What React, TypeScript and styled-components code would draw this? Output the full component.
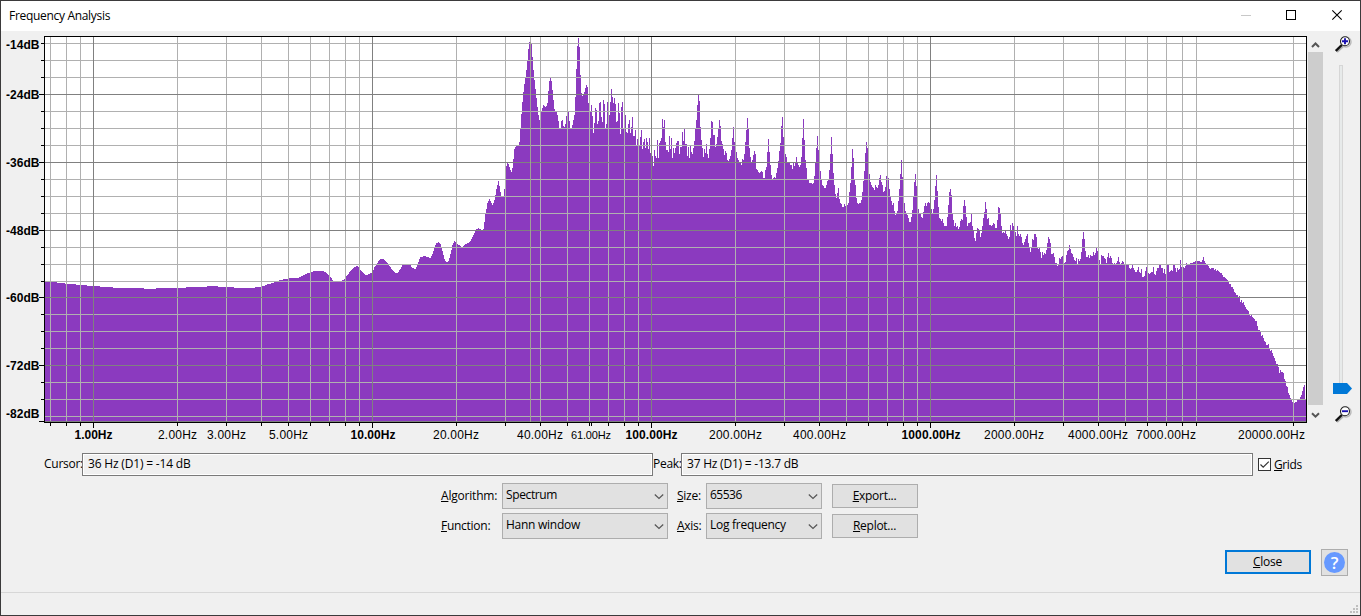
import React from 'react';
import styled, { createGlobalStyle } from 'styled-components';

const GlobalStyle = createGlobalStyle`
  body {
    margin: 0;
    overflow: hidden;
  }

  * {
    box-sizing: border-box;
  }
`;

const Window = styled.div`
  display: flex;
  flex-direction: column;
  width: 1361px;
  height: 616px;
  border: 1px solid #3b3a3b;
  background: #f0f0f0;
  color: #000;
  font-family: 'Open Sans', 'Noto Sans', sans-serif;
  font-size: 12px;
  line-height: 16px;
  white-space: nowrap;
`;

const TitleBar = styled.div`
  display: flex;
  justify-content: space-between;
  height: 30px;
  padding: 7px 17px 0 8px;
  background: #fff;
`;

const Label = styled.span<{ $track?: number }>`
  letter-spacing: ${({ $track = -0.27 }) => $track}px;
`;

const Mnemonic = styled.span`
  text-decoration: underline;
  text-decoration-thickness: 1px;
  text-underline-offset: 1px;
`;

const PlotRow = styled.div`
  display: flex;
  height: 416px;
`;

const ScrollBar = styled.div`
  display: flex;
  flex-direction: column;
  align-items: center;
  width: 15px;
  height: 390px;
  margin: 5px 0 0 1px;
`;

const ScrollThumb = styled.div`
  width: 15px;
  height: 353px;
  background: #cdcdcd;
`;

const ZoomColumn = styled.div`
  display: flex;
  flex-direction: column;
  width: 20px;
  margin: 5px 0 0 9px;
`;

const SliderTrack = styled.div`
  width: 4px;
  height: 318px;
  margin: 12px 0 0 7px;
  border: 1px solid #d6d6d6;
  border-bottom: 0;
  background: #e7eaea;
`;

const SliderThumb = styled.svg`
  margin-bottom: 12px;
`;

const MagnifierIcon = styled.svg`
  margin-left: 3px;
`;

const ReadoutRow = styled.div`
  display: flex;
  align-items: center;
  height: 23px;
  margin-top: 6px;
  padding-left: 43px;
`;

const ReadoutLabel = styled(Label)<{ $width: number }>`
  width: ${({ $width }) => $width}px;
  margin-top: -1px;
`;

const Readout = styled.div<{ $width: number }>`
  width: ${({ $width }) => $width}px;
  height: 23px;
  padding: 2px 0 0 5px;
  border: 1px solid #7a7a7a;
  box-shadow: inset 0 0 0 1px #fff;
`;

const CheckBox = styled.span`
  display: flex;
  width: 13px;
  height: 13px;
  margin: 0 3px 0 5px;
  border: 1px solid #333;
  background: #fff;
`;

const Controls = styled.div`
  display: grid;
  grid-template-columns: 61px 166px 38px 116px 86px;
  grid-auto-rows: 26px;
  row-gap: 4px;
  align-items: center;
  margin: 7px 0 0 440px;

  & > :nth-child(5n + 3) {
    padding-left: 9px;
  }

  & > :nth-child(5n) {
    margin-left: 10px;
  }
`;

const Select = styled.div`
  display: flex;
  justify-content: space-between;
  height: 26px;
  padding: 3px 3px 0 3px;
  border: 1px solid #adadad;
  background: #e1e1e1;
`;

const Button = styled.button<{ $primary?: boolean }>`
  width: 86px;
  height: 24px;
  padding: 0 1px 1px 0;
  border: ${({ $primary }) => ($primary ? '2px solid #0078d7' : '1px solid #adadad')};
  background: #e1e1e1;
  color: #000;
  font: inherit;
`;

const Footer = styled.div`
  display: flex;
  justify-content: flex-end;
  align-items: flex-start;
  gap: 10px;
  height: 27px;
  margin-top: 10px;
  padding-right: 12px;

  & > ${Button} {
    margin-top: 1px;
  }
`;

const HelpButton = styled.button`
  display: flex;
  width: 27px;
  height: 27px;
  padding: 2px;
  border: 1px solid #adadad;
  background: #e1e1e1;
`;

const StatusBar = styled.div`
  display: flex;
  flex: 1;
  justify-content: flex-end;
  align-items: flex-end;
  margin-top: 16px;
  padding: 0 2px 2px 0;
  border-top: 1px solid #d7d7d7;
`;

// Low end of the spectrum, smooth enough to be interpolated: [x, top]
const lowPoints = [
  [45, 282], [54, 282], [60, 283], [70, 284], [81, 285], [93, 286], [107, 287],
  [118, 288], [143, 288], [145, 289], [154, 289], [156, 288], [184, 288], [186, 287],
  [205, 287], [207, 286], [217, 286], [219, 287], [233, 287], [235, 288], [252, 288],
  [257, 287], [263, 286], [268, 284], [272, 283], [277, 281], [280, 280], [290, 278],
  [297, 278], [301, 276], [308, 273], [314, 271], [323, 271], [326, 273], [330, 277],
  [333, 281], [335, 282], [338, 282], [341, 281], [344, 279], [347, 275], [350, 271],
  [354, 267], [357, 266], [361, 271], [365, 275], [369, 274], [372, 272], [374, 267],
  [378, 261], [380, 259], [383, 259], [386, 262], [389, 266], [392, 270], [395, 273],
  [397, 273], [400, 269], [402, 265], [410, 265], [412, 268], [415, 269], [417, 264],
  [420, 257], [424, 256], [430, 258], [432, 254], [434, 247], [436, 243], [438, 242],
  [440, 244], [442, 251], [444, 259], [446, 262], [448, 261], [450, 254], [452, 245],
  [454, 241], [457, 244], [460, 246], [462, 247], [465, 244], [468, 243], [470, 241],
  [472, 237], [474, 233], [476, 229], [478, 228], [480, 229], [482, 230], [483, 229],
  [484, 222], [485, 214], [487, 203], [489, 199], [490, 201], [492, 205], [494, 200],
  [496, 189], [498, 181], [499, 186], [500, 192], [501, 197], [503, 197], [504, 189],
  [505, 166],
];

// One value per column from x = 506
const highTops = [
  166, 163, 164, 167, 170, 172, 168, 159, 149, 147, 146, 146, 146, 142, 129, 114, 102, 92,
  84, 78, 70, 61, 49, 42, 41, 44, 57, 70, 80, 89, 98, 107, 115, 120, 112, 111, 108, 105,
  106, 107, 106, 103, 91, 81, 78, 81, 90, 100, 109, 111, 112, 115, 121, 128, 128, 121, 120,
  126, 127, 124, 116, 128, 112, 121, 128, 128, 125, 120, 115, 97, 69, 46, 38, 47, 75, 93,
  96, 95, 92, 88, 85, 87, 103, 111, 111, 105, 116, 133, 123, 108, 110, 124, 121, 103, 102,
  117, 122, 100, 104, 128, 124, 102, 112, 115, 102, 89, 97, 103, 98, 104, 122, 121, 103,
  113, 134, 107, 102, 128, 128, 115, 132, 133, 124, 120, 133, 127, 117, 136, 136, 130, 145,
  139, 145, 146,
  // 640
  137, 130, 149, 142, 139, 148, 138, 142, 149, 138, 153, 154, 156, 166, 150, 156, 158, 140,
  158, 143, 141, 138, 119, 127, 120, 142, 150, 150, 152, 136, 149, 138, 158, 148, 153, 148,
  143, 141, 141, 154, 147, 147, 132, 141, 129, 144, 144, 156, 147, 158, 146, 152, 154, 148,
  141, 129, 120, 105, 95, 101, 127, 140, 148, 157, 149, 153, 144, 154, 158, 149, 138, 121,
  122, 135, 135, 147, 144, 137, 129, 120, 126, 141, 144, 149, 155, 151, 153, 160, 161, 159,
  156, 150, 138, 127, 142, 144, 152, 158, 160, 162, 162, 165, 159, 160, 154, 142, 130, 118,
  129, 148, 157, 162, 160, 155, 151, 154, 169, 170, 172, 173, 172, 171, 172, 178, 178, 170,
  167, 152, 139, 152, 165, 175, 179, 178, 177, 178, 173, 168, 161, 151, 143, 126, 117, 137,
  150, 154, 157, 162, 162, 162, 165, 165, 169, 163, 166, 163, 157, 163, 165, 167, 165, 157,
  138, 119, 140, 160, 168, 179, 180, 183, 183, 183, 184, 183, 176, 163, 148, 136, 150, 163,
  171, 180, 185, 186, 188, 188, 185, 181, 180, 170, 154, 137, 154, 173, 185, 194, 198, 193,
  188, 199, 203, 204, 207, 207, 204, 206, 206, 205, 203, 192, 183, 167, 149, 158, 180, 185,
  198, 203, 204, 203,
  // 860
  203, 200, 192, 181, 171, 153, 142, 148, 165, 174, 182, 185, 187, 188, 190, 185, 187, 188,
  185, 178, 175, 182, 185, 192, 191, 187, 176, 180, 178, 189, 196, 201, 205, 203, 211, 215,
  214, 211, 201, 189, 174, 160, 177, 199, 203, 211, 214, 215, 218, 222, 222, 217, 210, 196,
  182, 174, 186, 201, 209, 213, 214, 217, 218, 212, 206, 203, 206, 203, 202, 203, 210, 209,
  214, 209, 200, 186, 175, 191, 207, 218, 219, 221, 219, 223, 226, 226, 226, 217, 205, 192,
  189, 195, 214, 220, 226, 223, 227, 226, 229, 227, 221, 219, 220, 206, 200, 206, 217, 226,
  223, 223, 222, 214, 226, 231, 238, 241, 233, 228, 229, 231, 237, 233, 226, 218, 212, 202,
  209, 219, 218, 225, 225, 226, 225, 223, 224, 228, 228, 220, 207, 208, 214, 226, 233, 232,
  233, 231, 234, 236, 239, 237, 225, 231, 223, 226, 231, 232, 236, 226, 234, 236, 234, 237,
  243, 245, 242, 239, 236, 234, 243, 248, 252, 248, 239, 240, 234, 234, 237, 248, 249, 248,
  252, 258, 252, 255, 253, 254, 250, 243, 237, 239, 243, 254, 254, 253, 257, 263, 263, 266,
  264, 258, 259, 257, 256, 263, 263, 262, 255, 251, 250, 245,
  // 1070
  249, 253, 254, 257, 260, 261, 258, 264, 259, 261, 259, 252, 239, 232, 239, 251, 257, 257,
  255, 258, 255, 256, 256, 252, 255, 253, 248, 251, 255, 260, 264, 255, 256, 256, 258, 259,
  263, 257, 253, 258, 256, 258, 263, 264, 263, 264, 263, 261, 257, 262, 264, 263, 261, 262,
  264, 263, 264, 265, 265, 268, 269, 268, 265, 268, 270, 272, 272, 270, 267, 272, 273, 269,
  277, 277, 276, 271, 267, 272, 273, 274, 273, 272, 272, 267, 274, 275, 271, 268, 268, 265,
  265, 268, 268, 273, 269, 274, 265, 265, 265, 272, 271, 270, 271, 265, 265, 268, 272, 268,
  270, 269, 260, 267, 267, 267, 268, 266, 263, 264, 265, 265, 263, 263, 263, 262, 262, 261,
  261, 261, 261, 261, 262, 262, 260, 257, 261, 263, 264, 265, 266, 268, 269, 268, 268, 268,
  270, 269, 271, 270, 271, 272, 273, 273, 275, 277, 277, 278, 279, 280, 281, 284, 284, 287,
  287, 289, 292, 293, 295, 295, 297, 296, 302, 300, 303, 302, 305, 307, 309, 310, 311, 315,
  316, 315, 317, 318, 319, 321, 321, 326, 330, 330, 331, 336, 335, 338, 341, 342, 345, 345,
  344, 349, 351, 350, 353, 356, 358, 361, 364, 364, 367, 373, 370, 372, 372, 373, 379, 381,
  386, 387, 393, 395, 398, 400, 402, 402, 403, 402, 402, 400, 399, 400, 397, 395, 391, 387,
  385, 399,
];

const topsFromPoints = (points: number[][]) => {
  const tops: number[] = [];
  for (let i = 0; i < points.length - 1; i++) {
    const [x0, y0] = points[i];
    const [x1, y1] = points[i + 1];
    for (let x = x0; x < x1; x++) {
      tops.push(Math.round(y0 + ((y1 - y0) * (x - x0)) / (x1 - x0)));
    }
  }
  tops.push(points[points.length - 1][1]);
  return tops;
};

const spectrumPath = () => {
  const tops = [...topsFromPoints(lowPoints), ...highTops].slice(0, 1261);
  return `M45 422${tops.map((y) => `V${y}h1`).join('')}V422Z`;
};

const majorX = [93, 372, 651, 930];
const minorX = [
  50, 66, 80, 177, 226, 261, 288, 310, 329, 345, 359, 456, 505, 540, 567, 589, 608, 624, 638,
  735, 784, 819, 846, 868, 887, 903, 917, 1014, 1063, 1098, 1125, 1147, 1166, 1182, 1196, 1293,
];
const majorY = [94, 162, 230, 297, 365];
const minorY = [
  43, 60, 77, 111, 128, 145, 179, 196, 213, 247, 264, 281, 314, 331, 348, 382, 399, 416,
];

const dbLabels: [number, string][] = [
  [49, '-14dB'],
  [99, '-24dB'],
  [167, '-36dB'],
  [235, '-48dB'],
  [302, '-60dB'],
  [370, '-72dB'],
  [418, '-82dB'],
];

// x centre, text, drawn width, weight, size
const hzLabels: [number, string, number, number, number][] = [
  [93.5, '1.00Hz', 38, 700, 12],
  [177.5, '2.00Hz', 39, 400, 12],
  [226.5, '3.00Hz', 39, 400, 12],
  [288.5, '5.00Hz', 39, 400, 12],
  [373, '10.00Hz', 45, 700, 12],
  [456, '20.00Hz', 46, 400, 12],
  [540, '40.00Hz', 46, 400, 12],
  [591, '61.00Hz', 40, 400, 11],
  [651.5, '100.00Hz', 52, 700, 12],
  [735.5, '200.00Hz', 53, 400, 12],
  [819.5, '400.00Hz', 53, 400, 12],
  [931, '1000.00Hz', 59, 700, 12],
  [1014, '2000.00Hz', 60, 400, 12],
  [1098, '4000.00Hz', 60, 400, 12],
  [1166, '7000.00Hz', 60, 400, 12],
  [1271.5, '20000.00Hz', 67, 400, 12],
];

const vLines = (xs: number[], from: number, to: number) =>
  xs.map((x) => `M${x + 0.5} ${from}V${to}`).join('');
const hLines = (ys: number[], from: number, to: number) =>
  ys.map((y) => `M${from} ${y + 0.5}H${to}`).join('');

const SpectrumPlot = () => (
  <svg width="1306" height="416" viewBox="1 31 1306 416" fill="none">
    <g shapeRendering="crispEdges">
      <rect x="44.5" y="36.5" width="1262" height="386" fill="#fff" />
      <path d={spectrumPath()} fill="#8b3abf" />
      <path d={vLines(minorX, 37, 422) + hLines(minorY, 45, 1306)} stroke="#b0b0b0" />
      <path
        d={vLines(majorX, 37, 422) + hLines([...majorY, 421], 45, 1306)}
        stroke="#808080"
      />
      <path d="M530.5 42V422" stroke="#a0a096" />
      <path d="M530.5 37V42" stroke="#b0b0b0" />
      <rect x="44.5" y="36.5" width="1262" height="386" stroke="#000" />
      <path
        d={
          vLines([...minorX, 591], 423, 426) +
          vLines(majorX, 423, 428) +
          hLines(minorY.slice(0, -1), 41, 44) +
          hLines([...majorY, 421], 39, 44)
        }
        stroke="#000"
      />
    </g>
    <g fill="#000" fontFamily="'Liberation Sans', Arial, sans-serif">
      {dbLabels.map(([y, text]) => (
        <text key={text} x="6" y={y} fontSize="12" fontWeight="700" textLength="33.5">
          {text}
        </text>
      ))}
      {hzLabels.map(([x, text, width, weight, size]) => (
        <text
          key={text}
          x={x - width / 2}
          y="439"
          fontSize={size}
          fontWeight={weight}
          textLength={width}
        >
          {text}
        </text>
      ))}
    </g>
  </svg>
);

const WindowButtons = () => (
  <svg width="102" height="13" viewBox="1241 8 102 13" fill="none" stroke="#000">
    <path d="M1241 15.5H1251" stroke="#c8c8c8" />
    <rect x="1286.5" y="10.5" width="9" height="9" />
    <path d="M1332.3 10.3L1341.7 19.7M1341.7 10.3L1332.3 19.7" strokeWidth="1.1" />
  </svg>
);

const ScrollArrow = ({ down }: { down?: boolean }) => (
  <svg width="15" height={down ? 19 : 16} viewBox={down ? '0 -1 15 19' : '0 0 15 16'}>
    <path
      d={down ? 'M4 7.2L7.5 10.7L11 7.2' : 'M4 11L7.5 7.5L11 11'}
      fill="none"
      stroke="#555"
      strokeWidth="2"
    />
  </svg>
);

const Magnifier = ({ plus }: { plus?: boolean }) => (
  <MagnifierIcon width="17" height="17" viewBox="0 0 17 17" fill="none">
    <path d="M2 16L8 10.5" stroke="#b0b0b0" strokeWidth="2" />
    <circle cx="11" cy="6" r="5" stroke="#b8b8b8" strokeWidth="1.4" />
    <circle cx="10" cy="5.2" r="4.5" fill="#fff" stroke="#222" strokeWidth="1.1" />
    <path d="M0.8 15L6.8 9" stroke="#111" strokeWidth="2.4" />
    <path
      d={plus ? 'M7 5.2H13M10 2.2V8.2' : 'M7 5.2H13'}
      stroke="#1a10b0"
      strokeWidth="1.9"
    />
  </MagnifierIcon>
);

const Chevron = () => (
  <svg width="10" height="17" viewBox="0 0 10 17">
    <path d="M0.8 7.5L5 11.5L9.2 7.5" fill="none" stroke="#555" strokeWidth="1.2" />
  </svg>
);

const App = () => (
  <>
    <GlobalStyle />
    <Window>
      <TitleBar>
        <Label $track={-0.31}>Frequency Analysis</Label>
        <WindowButtons />
      </TitleBar>
      <PlotRow>
        <SpectrumPlot />
        <ScrollBar>
          <ScrollArrow />
          <ScrollThumb />
          <ScrollArrow down />
        </ScrollBar>
        <ZoomColumn>
          <Magnifier plus />
          <SliderTrack />
          <SliderThumb width="20" height="11" viewBox="0 0 20 11">
            <path d="M1 0H15L20 5.5L15 11H1Z" fill="#0078d7" />
          </SliderThumb>
          <Magnifier />
        </ZoomColumn>
      </PlotRow>
      <ReadoutRow>
        <ReadoutLabel $width={38}>Cursor:</ReadoutLabel>
        <Readout $width={571}>
          <Label $track={-0.18}>36 Hz (D1) = -14 dB</Label>
        </Readout>
        <ReadoutLabel $width={28}>Peak:</ReadoutLabel>
        <Readout $width={572}>
          <Label $track={-0.22}>37 Hz (D1) = -13.7 dB</Label>
        </Readout>
        <CheckBox>
          <svg width="11" height="11" viewBox="0 0 11 11">
            <path d="M1.5 5.5L4.2 8.2L9.8 2.6" fill="none" stroke="#333" strokeWidth="1.2" />
          </svg>
        </CheckBox>
        <Label $track={-0.4}>
          <Mnemonic>G</Mnemonic>rids
        </Label>
      </ReadoutRow>
      <Controls>
        <Label $track={-0.2}>
          <Mnemonic>A</Mnemonic>lgorithm:
        </Label>
        <Select>
          <Label $track={-0.38}>Spectrum</Label>
          <Chevron />
        </Select>
        <Label>
          <Mnemonic>S</Mnemonic>ize:
        </Label>
        <Select>
          <Label $track={-0.5}>65536</Label>
          <Chevron />
        </Select>
        <Button>
          <Label>
            <Mnemonic>E</Mnemonic>xport...
          </Label>
        </Button>
        <Label>
          <Mnemonic>F</Mnemonic>unction:
        </Label>
        <Select>
          <Label>Hann window</Label>
          <Chevron />
        </Select>
        <Label>
          <Mnemonic>A</Mnemonic>xis:
        </Label>
        <Select>
          <Label>Log frequency</Label>
          <Chevron />
        </Select>
        <Button>
          <Label>
            <Mnemonic>R</Mnemonic>eplot...
          </Label>
        </Button>
      </Controls>
      <Footer>
        <Button $primary>
          <Label>
            <Mnemonic>C</Mnemonic>lose
          </Label>
        </Button>
        <HelpButton>
          <svg width="21" height="21" viewBox="0 0 21 21">
            <circle cx="10.5" cy="10.5" r="10.5" fill="#6699ff" />
            <text
              x="10.5"
              y="16.5"
              fill="#fff"
              fontSize="17"
              fontWeight="600"
              fontFamily="'Open Sans', sans-serif"
              textAnchor="middle"
            >
              ?
            </text>
          </svg>
        </HelpButton>
      </Footer>
      <StatusBar>
        <svg width="8" height="8" viewBox="0 0 8 8" fill="#bfbfbf" shapeRendering="crispEdges">
          <path d="M6 0h2v2h-2zM3 3h2v2h-2zM6 3h2v2h-2zM0 6h2v2h-2zM3 6h2v2h-2zM6 6h2v2h-2z" />
        </svg>
      </StatusBar>
    </Window>
  </>
);

export default App;
